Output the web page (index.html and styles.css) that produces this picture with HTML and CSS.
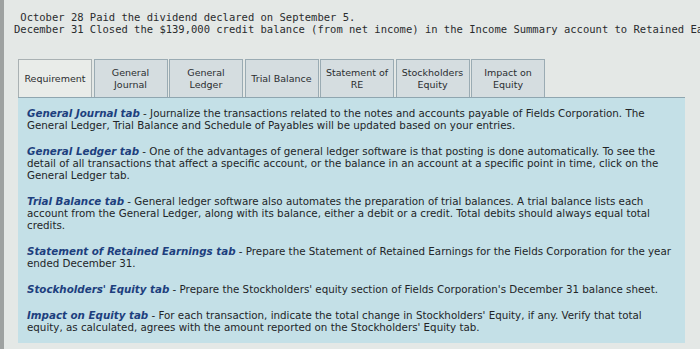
FILE: index.html
```html
<!DOCTYPE html>
<html>
<head>
<meta charset="utf-8">
<link rel="stylesheet" href="styles.css">
</head>
<body>
<div class="page">
  <div class="intro"><div class="line"> October 28 Paid the dividend declared on September 5.</div><div class="line">December 31 Closed the $139,000 credit balance (from net income) in the Income Summary account to Retained Earnings.</div></div>
  <div class="tabs">
    <div class="tab active">Requirement</div>
    <div class="tab">General<br>Journal</div>
    <div class="tab">General<br>Ledger</div>
    <div class="tab">Trial Balance</div>
    <div class="tab">Statement of<br>RE</div>
    <div class="tab">Stockholders<br>Equity</div>
    <div class="tab">Impact on<br>Equity</div>
  </div>
  <div class="panel">
    <p><b>General Journal tab</b> - Journalize the transactions related to the notes and accounts payable of Fields Corporation. The General Ledger, Trial Balance and Schedule of Payables will be updated based on your entries.</p>
    <p><b>General Ledger tab</b> - One of the advantages of general ledger software is that posting is done automatically. To see the detail of all transactions that affect a specific account, or the balance in an account at a specific point in time, click on the General Ledger tab.</p>
    <p><b>Trial Balance tab</b> - General ledger software also automates the preparation of trial balances. A trial balance lists each account from the General Ledger, along with its balance, either a debit or a credit. Total debits should always equal total credits.</p>
    <p><b>Statement of Retained Earnings tab</b> - Prepare the Statement of Retained Earnings for the Fields Corporation for the year ended December 31.</p>
    <p><b>Stockholders' Equity tab</b> - Prepare the Stockholders' equity section of Fields Corporation's December 31 balance sheet.</p>
    <p><b>Impact on Equity tab</b> - For each transaction, indicate the total change in Stockholders' Equity, if any. Verify that total equity, as calculated, agrees with the amount reported on the Stockholders' Equity tab.</p>
  </div>
</div>
</body>
</html>
```
FILE: styles.css
```css
html, body {
  margin: 0;
  padding: 0;
  width: 700px;
  height: 349px;
  overflow: hidden;
  background: #e4e8e6;
}
.page {
  border-left: 4px solid #9ea2a1;
  height: 349px;
  box-sizing: border-box;
  padding-top: 11px;
  overflow: hidden;
}
.intro {
  font-family: "DejaVu Sans Mono", monospace;
  font-size: 10.5px;
  line-height: 12px;
  color: #2a2c2e;
  white-space: pre;
  padding-left: 10px;
  overflow: hidden;
}
.tabs {
  display: flex;
  gap: 1.5px;
  margin-top: 24px;
  margin-left: 14px;
  height: 38px;
}
.tab {
  width: 74px;
  box-sizing: border-box;
  border: 1px solid #9aabb3;
  border-bottom: none;
  background: #d5dde0;
  font-family: "DejaVu Sans", sans-serif;
  font-size: 9.5px;
  line-height: 12px;
  color: #2b2d30;
  display: flex;
  align-items: center;
  justify-content: center;
  text-align: center;
}
.tab.active {
  background: #e9ece9;
  border-color: #a9b1b3;
}
.panel {
  margin-left: 14px;
  width: 667px;
  height: 246px;
  box-sizing: border-box;
  background: #c4e0e7;
  border-top: 1px solid #8fa6b0;
  padding: 9px 10px 0 9px;
  font-family: "DejaVu Sans", sans-serif;
  font-size: 10.3px;
  line-height: 12px;
  color: #222528;
}
.panel p {
  margin: 0 0 14px 0;
}
.panel b {
  font-style: italic;
  font-weight: bold;
  color: #1d3f7e;
}
```
